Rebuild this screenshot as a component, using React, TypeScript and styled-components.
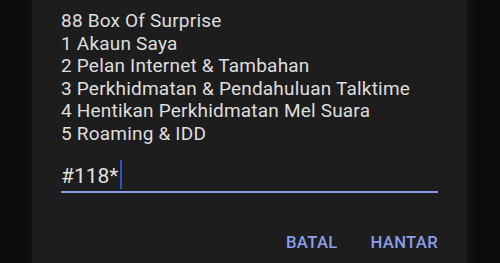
import styled, { createGlobalStyle } from "styled-components";

const GlobalStyle = createGlobalStyle`
  html, body {
    margin: 0;
    padding: 0;
    background: #0d0d0d;
  }
  body {
    font-family: Roboto, "Liberation Sans", sans-serif;
  }
`;

const Screen = styled.div`
  display: flex;
  width: 500px;
  height: 263px;
  overflow: hidden;
`;

const SideShade = styled.div<{ $side: "left" | "right" }>`
  width: ${(p) => (p.$side === "left" ? 32 : 33)}px;
  flex-shrink: 0;
  background: ${(p) =>
    p.$side === "left"
      ? "linear-gradient(to right, #0b0b0b 0%, #0b0b0b 75%, #131313 100%)"
      : "linear-gradient(to right, #111111 0%, #0d0d0d 30%, #0c0c0c 100%)"};
`;

const Dialog = styled.div`
  flex: 1;
  background: #1d1d1d;
  padding: 10px 29px 0 29px;
  display: flex;
  flex-direction: column;
`;

const Message = styled.div`
  color: #dedede;
  font-size: 19px;
  letter-spacing: 0.2px;
  line-height: 22.6px;
`;

const InputRow = styled.div`
  margin-top: 13px;
  height: 32px;
  display: flex;
  align-items: center;
  border-bottom: 2px solid #8a9de6;
`;

const InputText = styled.span`
  color: #e2e2e2;
  font-size: 21px;
  line-height: 29px;
  padding-top: 3px;
`;

const Caret = styled.span`
  width: 2px;
  height: 29px;
  margin-left: 2px;
  background: #3153c9;
`;

const Actions = styled.div`
  margin-top: 40px;
  display: flex;
  justify-content: flex-end;
  gap: 33px;
`;

const ActionButton = styled.button`
  background: none;
  border: none;
  padding: 0;
  font-family: Roboto, "Liberation Sans", sans-serif;
  font-weight: 500;
  font-size: 16.7px;
  letter-spacing: 0.3px;
  color: #8a9de8;
  cursor: pointer;
`;

const lines = [
  "88 Box Of Surprise",
  "1 Akaun Saya",
  "2 Pelan Internet & Tambahan",
  "3 Perkhidmatan & Pendahuluan Talktime",
  "4 Hentikan Perkhidmatan Mel Suara",
  "5 Roaming & IDD",
];

export default function App() {
  return (
    <>
      <GlobalStyle />
      <Screen>
        <SideShade $side="left" />
        <Dialog>
          <Message>
            {lines.map((l) => (
              <div key={l}>{l}</div>
            ))}
          </Message>
          <InputRow>
            <InputText>#118*</InputText>
            <Caret />
          </InputRow>
          <Actions>
            <ActionButton>BATAL</ActionButton>
            <ActionButton>HANTAR</ActionButton>
          </Actions>
        </Dialog>
        <SideShade $side="right" />
      </Screen>
    </>
  );
}
